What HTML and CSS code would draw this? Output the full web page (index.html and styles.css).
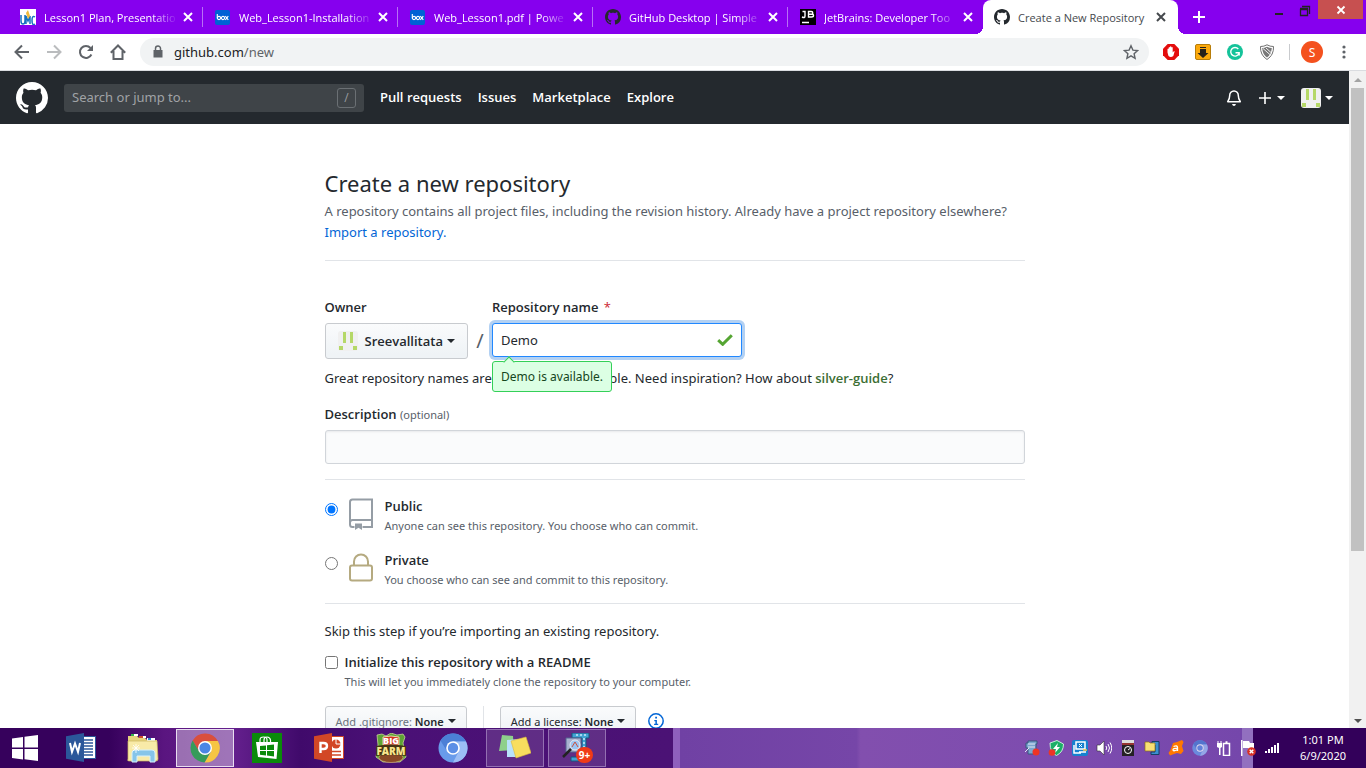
FILE: index.html
```html
<!DOCTYPE html>
<html lang="en">
<head>
<meta charset="utf-8">
<meta name="viewport" content="width=device-width, initial-scale=1">
<title>Create a New Repository</title>
<link rel="stylesheet" href="styles.css">
</head>
<body>
<svg class="defs" aria-hidden="true">
  <symbol id="cat" viewBox="0 0 16 16"><path d="M8 0C3.58 0 0 3.58 0 8c0 3.54 2.29 6.53 5.47 7.59.4.07.55-.17.55-.38 0-.19-.01-.82-.01-1.49-2.01.37-2.53-.49-2.69-.94-.09-.23-.48-.94-.82-1.13-.28-.15-.68-.52-.01-.53.63-.01 1.08.58 1.23.82.72 1.21 1.87.87 2.33.66.07-.52.28-.87.51-1.07-1.78-.2-3.64-.89-3.64-3.95 0-.87.31-1.59.82-2.15-.08-.2-.36-1.02.08-2.12 0 0 .67-.21 2.2.82.64-.18 1.32-.27 2-.27s1.36.09 2 .27c1.53-1.04 2.2-.82 2.2-.82.44 1.1.16 1.92.08 2.12.51.56.82 1.27.82 2.15 0 3.07-1.87 3.75-3.65 3.95.29.25.54.73.54 1.48 0 1.07-.01 1.93-.01 2.2 0 .21.15.46.55.38A8.01 8.01 0 0 0 16 8c0-4.42-3.58-8-8-8z"/></symbol>
  <symbol id="x" viewBox="0 0 16 16"><path d="M4 4l8 8M12 4l-8 8" fill="none" stroke="currentColor" stroke-width="2"/></symbol>
  <symbol id="box" viewBox="0 0 16 16"><rect y="1" width="15" height="15" rx="2" fill="#0061d5"/><g fill="none" stroke="#fff" stroke-width="1.1"><path d="M2.300 5v4.500"/><circle cx="4" cy="9" r="1.600"/><circle cx="8" cy="9" r="1.600"/><path d="M10.300 7.200l3 3.600M13.300 7.200l-3 3.600"/></g></symbol>
  <symbol id="ident" viewBox="0 0 20 20"><rect width="20" height="20" rx="3" fill="#f0f0f0"/><path fill="#b5d867" d="M5 1h3v11H5zM12 1h3v11h-3zM1 15h4v4H1zM15 15h4v4h-4z"/></symbol>
  <symbol id="chromium" viewBox="0 0 30 30"><circle cx="15" cy="15" r="14.500" fill="#689bea"/><path d="M15 8.500h13A14.500 14.500 0 0 0 2.500 7.700L9.300 18.500z" fill="#4b7fd6"/><path d="M15 8.500h13a14.500 14.500 0 0 1-13 21l5.700-11z" fill="#9cbef5"/><circle cx="15" cy="15" r="6.800" fill="#fff"/><circle cx="15" cy="15" r="5.200" fill="#5c8fe6"/></symbol>
</svg>

<div class="tabs" role="tablist">
  <div class="tab">
    <svg class="i16" viewBox="0 0 16 16"><path fill="#fff" d="M0 0h16v16H0z"/><path d="M1 6v6q0 3 2 3t2-3V6M6 15V7l2 5 2-5v8M15 8q-3-2-3 3.500T15 15" fill="none" stroke="#1670c0" stroke-width="1.500"/><path d="M6 4l2-3 2 6-2 3z" fill="#efb93b"/></svg>
    <a class="tab-title" href="#">Lesson1 Plan, Presentatio</a>
    <button class="tab-x" aria-label="Close tab"><svg class="i16"><use href="#x"/></svg></button>
  </div>
  <div class="tab">
    <svg class="i16"><use href="#box"/></svg>
    <a class="tab-title" href="#">Web_Lesson1-Installation</a>
    <button class="tab-x" aria-label="Close tab"><svg class="i16"><use href="#x"/></svg></button>
  </div>
  <div class="tab">
    <svg class="i16"><use href="#box"/></svg>
    <a class="tab-title" href="#">Web_Lesson1.pdf | Powe</a>
    <button class="tab-x" aria-label="Close tab"><svg class="i16"><use href="#x"/></svg></button>
  </div>
  <div class="tab">
    <svg class="i16 dark"><use href="#cat"/></svg>
    <a class="tab-title" href="#">GitHub Desktop | Simple</a>
    <button class="tab-x" aria-label="Close tab"><svg class="i16"><use href="#x"/></svg></button>
  </div>
  <div class="tab">
    <svg class="i16" viewBox="0 0 16 16"><path d="M0 0h16v16H0z"/><path d="M2 8q3 1.500 3-1V2.500H2.500M8.500 2.500V8h3q2 0 2-1.500t-2-1.300h-3 2.700q1.600 0 1.600-1.300t-1.600-1.400zM2 13.500h7" fill="none" stroke="#fff" stroke-width="1.400"/></svg>
    <a class="tab-title" href="#">JetBrains: Developer Too</a>
    <button class="tab-x" aria-label="Close tab"><svg class="i16"><use href="#x"/></svg></button>
  </div>
  <div class="tab active">
    <svg class="i16 dark"><use href="#cat"/></svg>
    <a class="tab-title" href="#">Create a New Repository</a>
    <button class="tab-x" aria-label="Close tab"><svg class="i16"><use href="#x"/></svg></button>
  </div>
  <button class="newtab" aria-label="New tab"><svg class="i16" viewBox="0 0 16 16"><path d="M8 2v12M2 8h12" stroke="#fff" stroke-width="2"/></svg></button>
  <div class="winctl">
    <button aria-label="Minimize"><svg class="i16" viewBox="0 0 16 16"><path fill="#222" d="M4 11h8v2H4z"/></svg></button>
    <button aria-label="Restore"><svg class="i16" viewBox="0 0 16 16"><path d="M3.500 7.500h7v6h-7zM3 6.500h8M5 4.500h7.500V12" fill="none" stroke="#222" stroke-width="1.300"/></svg></button>
    <button class="close" aria-label="Close"><svg class="i16" viewBox="0 0 16 16"><path d="M4.500 4.500l7 7M11.500 4.500l-7 7" stroke="#fff" stroke-width="1.800"/></svg></button>
  </div>
</div>

<div class="toolbar">
  <button aria-label="Back"><svg class="i16" viewBox="0 0 16 16"><path d="M15 8H2M8 1.500L1.500 8 8 14.500" fill="none" stroke="#5f6368" stroke-width="2"/></svg></button>
  <button aria-label="Forward"><svg class="i16" viewBox="0 0 16 16"><path d="M1 8h13M8 1.500L14.500 8 8 14.500" fill="none" stroke="#babcbe" stroke-width="2"/></svg></button>
  <button aria-label="Reload"><svg class="i16" viewBox="0 0 16 16"><path d="M13.400 10.500A6 6 0 1 1 12.500 4" fill="none" stroke="#5f6368" stroke-width="2"/><path d="M15 1v6H9z" fill="#5f6368"/></svg></button>
  <button aria-label="Home"><svg class="i16" viewBox="0 0 16 16"><path d="M.8 8.700L8 1.500l7.200 7.200M3.500 7v8h9V7" fill="none" stroke="#5f6368" stroke-width="2"/></svg></button>
  <div class="omni">
    <svg class="i16" viewBox="0 0 16 16"><path d="M3.500 6h9v7.500h-9z" fill="#5f6368"/><path d="M5.500 6V4.500a2.500 2.500 0 0 1 5 0V6" fill="none" stroke="#5f6368" stroke-width="1.500"/></svg>
    <span class="url"><b>github.com</b>/new</span>
    <button aria-label="Bookmark"><svg class="i16" viewBox="0 0 16 16"><path d="M8 1.800l1.900 4.300 4.700.5-3.500 3.100 1 4.600L8 11.900l-4.100 2.400 1-4.600L1.400 6.600l4.700-.5z" fill="none" stroke="#5f6368" stroke-width="1.400"/></svg></button>
  </div>
  <div class="exts">
    <button aria-label="Ad blocker"><svg class="i16" viewBox="0 0 16 16"><path fill="#e40d0d" d="M4.700 0h6.600L16 4.700v6.600L11.300 16H4.700L0 11.300V4.700z"/><path d="M4.500 8.500V5q.7-1 1.200 0v2.500V3.500q.7-1 1.300 0V7 2.800q.7-1 1.400 0V7 3.500q.7-1 1.300 0v5q1-1.800 2-1.200L10.300 12q-2.500 2-4.800 0z" fill="#fff"/></svg></button>
    <button aria-label="Downloader"><svg class="i16" viewBox="0 0 16 16"><rect x=".5" y=".5" width="15" height="15" rx="1.500" fill="#fca90b" stroke="#b77d0a"/><path d="M5 3h6v1H5zM5 5h6v4h2.500L8 14 2.500 9H5z" fill="#27211a"/></svg></button>
    <button aria-label="Grammar checker"><svg class="i16" viewBox="0 0 16 16"><circle cx="8" cy="8" r="8" fill="#15c39a"/><path d="M11.300 5A4.300 4.300 0 1 0 12 9.500M8.500 8.800h3.700v2.700" fill="none" stroke="#fff" stroke-width="1.400"/></svg></button>
    <button aria-label="Shield"><svg class="i16" viewBox="0 0 16 16"><path d="M8 .8q3 1.800 6.500 1.700Q15 11 8 15.500 1 11 1.500 2.500 5 2.600 8 .8z" fill="#fff" stroke="#707070" stroke-width="1"/><path d="M8 2.700q2.500 1.200 4.800 1.400Q12.500 10.500 8 13.500 3.500 10.500 3.200 4.100 5.500 4 8 2.700z" fill="#777"/><path d="M4 4.500l8 7M7 4l5 4.500" stroke="#eee" stroke-width="1"/></svg></button>
  </div>
  <button class="profile">S</button>
  <button aria-label="Menu"><svg class="i16" viewBox="0 0 16 16"><g fill="#5f6368"><circle cx="8" cy="3" r="1.600"/><circle cx="8" cy="8" r="1.600"/><circle cx="8" cy="13" r="1.600"/></g></svg></button>
</div>

<div class="view">
  <div class="page">
    <header class="gh">
      <a href="#" aria-label="Homepage"><svg class="logo"><use href="#cat"/></svg></a>
      <div class="search"><input type="text" aria-label="Search" placeholder="Search or jump to..."><kbd>/</kbd></div>
      <nav><a href="#">Pull requests</a><a href="#">Issues</a><a href="#">Marketplace</a><a href="#">Explore</a></nav>
      <div class="user">
        <button aria-label="Notifications"><svg class="i16" viewBox="0 0 16 16"><path d="M8 1a4.300 4.300 0 0 0-4.300 4.500c0 3-.6 4.200-2 6.200h12.600c-1.400-2-2-3.200-2-6.200A4.300 4.300 0 0 0 8 1z" fill="none" stroke="#fff" stroke-width="1.500" stroke-linejoin="round"/><path d="M6 14h4q-.6 2-2 2t-2-2z" fill="#fff"/></svg></button>
        <button class="drop" aria-label="Create new"><svg class="plus" viewBox="0 0 14 14"><path d="M7 1v12M1 7h12" stroke="#fff" stroke-width="1.600"/></svg><span class="caret"></span></button>
        <button class="drop" aria-label="Account"><svg class="i20"><use href="#ident"/></svg><span class="caret"></span></button>
      </div>
    </header>

    <main>
      <div class="intro">
        <h1>Create a new repository</h1>
        <p>A repository contains all project files, including the revision history. Already have a project repository elsewhere? <a href="#">Import a repository.</a></p>
      </div>
      <form>
        <div class="names">
          <div class="field">
            <label for="owner">Owner</label>
            <button class="btn owner" id="owner" type="button"><svg class="i20"><use href="#ident"/></svg><span>Sreevallitata</span><span class="caret"></span></button>
          </div>
          <span class="slash">/</span>
          <div class="field">
            <label for="repo">Repository name <span class="req">*</span></label>
            <div class="repo">
              <input id="repo" type="text" value="Demo">
              <svg class="check" viewBox="0 0 16 12"><path d="M1.200 6.200l4.500 4.100L14.800 1.300" fill="none" stroke="#55a532" stroke-width="3"/></svg>
              <div class="tip" role="status">Demo is available.</div>
            </div>
          </div>
        </div>
        <p class="hint">Great repository names are short and memorable. Need inspiration? How about <strong>silver-guide</strong>?</p>
        <div class="field desc">
          <label for="desc">Description <small>(optional)</small></label>
          <input id="desc" type="text">
        </div>
        <div class="options">
          <div class="option">
            <input type="radio" name="vis" id="public" checked>
            <svg class="vis" viewBox="0 0 24 32"><path d="M5.500 29H3.500Q1 29 1 26.500V4q0-2.500 2.500-2.500H23V29h-9.500M1 24.500q0-2.500 2.500-2.500H23" fill="none" stroke="#959da5" stroke-width="2"/><path d="M6 25.500h7V32l-3.500-2.300L6 32z" fill="#959da5"/></svg>
            <label for="public">Public<span class="note">Anyone can see this repository. You choose who can commit.</span></label>
          </div>
          <div class="option">
            <input type="radio" name="vis" id="private">
            <svg class="vis" viewBox="0 0 24 32"><rect x="1" y="13.500" width="22" height="15" rx="2" fill="none" stroke="#b5aa80" stroke-width="2"/><path d="M5 13V9.500a7 7 0 0 1 14 0V13" fill="none" stroke="#b5aa80" stroke-width="2"/></svg>
            <label for="private">Private<span class="note">You choose who can see and commit to this repository.</span></label>
          </div>
        </div>
        <p class="skip">Skip this step if you’re importing an existing repository.</p>
        <div class="readme">
          <input type="checkbox" id="readme">
          <label for="readme">Initialize this repository with a README<span class="note">This will let you immediately clone the repository to your computer.</span></label>
        </div>
        <div class="extras">
          <button class="btn small" type="button"><span><i>Add .gitignore:</i> None</span><span class="caret"></span></button>
          <span class="rule"></span>
          <button class="btn small" type="button"><span><em>Add a license:</em> None</span><span class="caret"></span></button>
          <svg class="i16" viewBox="0 0 16 16"><circle cx="8" cy="8" r="7.200" fill="none" stroke="#0366d6" stroke-width="1.500"/><path d="M7.200 3.800h1.800v1.700H7.200zM6.300 7h2.600v3.800h1.300v1.300H6.100v-1.300h1.300V8.200H6.300z" fill="#0366d6"/></svg>
        </div>
      </form>
    </main>
  </div>
  <div class="scroll" aria-hidden="true"><span class="arrow up"></span><span class="thumb"></span><span class="arrow down"></span></div>
</div>

<footer class="taskbar">
  <button class="start" aria-label="Start"><svg viewBox="0 0 26 26"><path fill="#fff" d="M0 3.500L11 2v10.500H0zM12.500 1.800L26 0v12.500H12.500zM0 14h11v10.500L0 23zM12.500 14H26v12l-13.500-1.800z"/></svg></button>
  <div class="apps">
    <button aria-label="Word"><svg viewBox="0 0 30 30"><path fill="#fff" stroke="#2b579a" d="M16 3.500h13.500v22H16z"/><path d="M18 7h9M18 10h9M18 13h9M18 16h9M18 19h9M18 22h9" stroke="#2b579a" stroke-width="1.400"/><path fill="#2b579a" d="M0 3.300L18 0v29L0 25.700z"/><path d="M4 10l2 9L9 10.500 12 19l2-9" fill="none" stroke="#fff" stroke-width="2"/></svg></button>
    <button aria-label="File Explorer"><svg class="wide" viewBox="0 0 32 30"><path fill="#e5d37e" d="M1 3h9l2 2h6l2 2h10v20H1z"/><path fill="#fff" d="M4 1h7v2H4zM12 3h7v2h-7zM20 5h8v3h-8z"/><path fill="#34b24a" d="M4 1h3v2H4z"/><path fill="#d14b2c" d="M12 3h4v2h-4z"/><path fill="#2987cf" d="M21 5h3v2h-3z"/><path fill="#f8eaa8" stroke="#cbb65b" stroke-width=".7" d="M1 8h29l1 18q0 2-2 2H2q-2 0-1-2z"/><path fill="#86c5e9" stroke="#d7f1fb" d="M5 29V20q0-3 3-3h17q3 0 3 3v9h-5v-6H10v6z"/><path d="M9 11v9M5 15h8M6 12l6 6M12 12l-6 6" stroke="#fff" stroke-width=".8"/></svg></button>
    <button class="open now" aria-label="Chrome"><svg viewBox="0 0 30 30"><path fill="#d94f3d" d="M15 8h12.800A14.500 14.500 0 0 0 2.600 7.500L9 18.300z"/><path fill="#f6c544" d="M15 8h12.900A14.500 14.500 0 0 1 14.500 29.500L21 18.500z"/><path fill="#359b5a" d="M2.600 7.500A14.500 14.500 0 0 0 14.500 29.500L20.500 19 9 18.300z"/><circle cx="15" cy="15" r="7" fill="#fff"/><circle cx="15" cy="15" r="5.600" fill="#4a86e4"/></svg></button>
    <button aria-label="Store"><svg viewBox="0 0 30 30"><path fill="#0a8a0a" d="M0 0h30v30H0z"/><path d="M8 10V7q0-3 3.500-3T15 7v3M12 10V7q0-3 3-3t3.500 3v3" fill="none" stroke="#fff" stroke-width="1.200"/><path fill="#fff" d="M4 9h22l-1.500 17L6 24z"/><path fill="#0a8a0a" d="M8 13l6-.6v4.600H8zM15 12.300l7-.8V17h-7zM8 18h6v4.400l-6-.6zM15 18h7v5.500l-7-.9z"/></svg></button>
    <button aria-label="PowerPoint"><svg viewBox="0 0 30 30"><path fill="#fff" stroke="#d24726" d="M16 3.500h13.500v22H16z"/><path d="M18 18.500h9M18 22h9" stroke="#d24726" stroke-width="1.500"/><circle cx="22" cy="11" r="4.500" fill="#d24726"/><path d="M22 6v5h5" stroke="#fff" fill="none"/><path fill="#d24726" d="M0 3.300L18 0v29L0 25.700z"/><path d="M6.500 20V10h3q3.500 0 3.500 3t-3.500 3h-3" fill="none" stroke="#fff" stroke-width="2.400"/></svg></button>
    <button aria-label="Big Farm"><svg class="wide" viewBox="0 0 32 30"><path fill="#5fa336" stroke="#d9dfa0" stroke-width=".7" d="M2 2l5-1 4 2 5-3 6 2 6-1 2 3-2 6 3 14-6 5H8l-7-5L3 12z"/><ellipse cx="16" cy="24.500" rx="12" ry="5" fill="#8a4a26" stroke="#d8b47a" stroke-width=".6"/><path fill="#cf3420" stroke="#fff4cb" stroke-width=".8" d="M8 4l8-1 8 1v8H8z"/><text class="farm-s" x="16" y="11" text-anchor="middle">BIG</text><path d="M1 13q15-3 30 0v10q-15-2-30 0z" fill="#463414"/><text class="farm-l" x="16" y="22" text-anchor="middle">FARM</text></svg></button>
    <button aria-label="Chromium"><svg><use href="#chromium"/></svg></button>
    <button class="open" aria-label="Sticky Notes"><svg class="wide" viewBox="0 0 32 30"><path fill="#8ed08b" d="M3 2l11 1 1 14-15 1z"/><path fill="#b9e2fb" d="M8 7l12-1v18H8z"/><path fill="#f8de5e" stroke="#d9b83e" stroke-width=".6" d="M12 8l15-4 5 16-15 5z"/></svg></button>
    <button class="open" aria-label="WinZip"><svg class="wide" viewBox="0 0 32 30"><path fill="#41a3d4" stroke="#14577f" d="M11 0h17v5h-3v19h3v4H10v-4h11V5H11z"/><path d="M23 5v19M15 2h10" stroke="#c6e8f7" stroke-width="1.500" stroke-dasharray="2 2"/><path fill="#a9b2cf" stroke="#53658f" d="M5 5h15v14H5z"/><circle cx="14" cy="12" r="5" fill="#9cc4f2" stroke="#e8edf5"/><path d="M11 14l3-5 3 5" stroke="#ca5442" fill="none"/><path d="M10 16l-8 8" stroke="#222" stroke-width="2.500"/></svg><span class="count">9+</span></button>
  </div>
  <div class="tray">
    <svg class="i16" viewBox="0 0 16 16"><path fill="#7aa6cf" stroke="#38597e" d="M4 1h9v3h-1v8h2v2H4V8H2V3h2z"/><path d="M4 4h7M4 7h7M1 12l4-4" stroke="#dfe8f5"/><circle cx="12" cy="12" r="3.500" fill="#ed3425"/></svg>
    <svg class="i16" viewBox="0 0 16 16"><path fill="#1caf67" stroke="#c9eedb" d="M2 3l7-2.500L15.500 4q0 8-7 11.500Q2 13 2 3z"/><path fill="#fff" d="M10 3L5 9h3l-1 4 5-6H9z"/><circle cx="4" cy="12.500" r="3.300" fill="#ed3425"/></svg>
    <svg class="i16" viewBox="0 0 16 16"><rect width="16" height="16" rx="2" fill="#1681cf"/><path d="M4 2h9v7H4zM2 5v8h7M7 12h7" fill="none" stroke="#fff" stroke-width="1.500"/><path d="M7 4l3 3M10 4L7 7" stroke="#fff"/><path d="M11 10h4" stroke="#f4c44b" stroke-width="1.500"/></svg>
    <svg class="i16" viewBox="0 0 16 16"><path fill="#fff" stroke="#333" stroke-width=".6" d="M1 5h3l4-4v14l-4-4H1z"/><path d="M10 6q1.500 2 0 4M12 4q3 4 0 8M14 2.500q3.500 5.500 0 11" fill="none" stroke="#fff"/></svg>
    <svg class="i16" viewBox="0 0 16 16"><path fill="#242124" d="M2 0h12v16H2z"/><path fill="#ddd" d="M2 0h12v3H2z"/><path d="M2 4h12" stroke="#bb3d36" stroke-width="1.500"/><circle cx="8" cy="10" r="3.500" fill="none" stroke="#fff"/><path d="M8 10l2-1.500" stroke="#fff"/></svg>
    <svg class="i16" viewBox="0 0 16 16"><path fill="#3c8fd0" stroke="#153f66" d="M8 1.500h7v13H7V12h4V5H8z"/><path fill="#f8df74" stroke="#917213" stroke-width=".7" d="M1 2h4l1 1h5v8H1z"/></svg>
    <svg class="i16" viewBox="0 0 16 16"><path fill="#ff7800" d="M9 2l5-2 1.500 2L14 6l1.500 5-2.500 3-4-1-3 1-4 1.500L.5 13l2-3L5 3z"/><path d="M5.500 6.500q4-1.500 4 1v3.500M9 8.500q-4-.5-4 1.300T9 10" fill="none" stroke="#fff" stroke-width="1.300"/></svg>
    <svg class="i16 dim"><use href="#chromium"/></svg>
    <svg class="i16" viewBox="0 0 16 16"><path d="M7.500 3.500h6v12h-6zM9.500 2h2" fill="none" stroke="#fff" stroke-width="1.500"/><path fill="#fff" d="M1 3h5v4L4.500 8v7H3V8L1 7zM1.500 1h1v2h-1zM4.500 1h1v2h-1z"/></svg>
    <svg class="i16" viewBox="0 0 16 16"><path fill="#fff" d="M1 0h1.500v16H1zM3 1h6l1 2h4v6H9L8 8H3z"/><circle cx="11.500" cy="11.500" r="4.300" fill="#d93025"/><path d="M9.700 9.700l3.600 3.600M13.300 9.700l-3.600 3.600" stroke="#fff" stroke-width="1.400"/></svg>
    <svg class="i16" viewBox="0 0 16 16"><path fill="#fff" d="M1 11h2v2H1zM4 9h2v4H4zM7 7h2v6H7zM10 5h2v8h-2zM13 3h2v10h-2z"/></svg>
  </div>
  <div class="clock"><span>1:01 PM</span><span>6/9/2020</span></div>
</footer>
</body>
</html>
```
FILE: styles.css
```css
* { box-sizing: border-box; }
body { margin: 0; height: 100vh; display: flex; flex-direction: column; overflow: hidden; font: 13px/21px "Noto Sans", "Open Sans", sans-serif; color: #24292e; background: #fff; }
button, input { font: inherit; color: inherit; margin: 0; }
button { border: 0; padding: 0; background: none; display: flex; align-items: center; justify-content: center; }
a { color: #0366d6; text-decoration: none; }
p, h1 { margin: 0; }
svg { display: block; flex: none; }
.defs { position: absolute; width: 0; height: 0; }
.i16 { width: 16px; height: 16px; }
.i20 { width: 20px; height: 20px; }
.dim { opacity: .8; }
.dark { fill: #24292e; }
.caret { border: 4px solid transparent; border-top-color: currentColor; border-bottom: 0; }

/* Tab strip */
.tabs { flex: none; height: 34px; display: flex; padding-left: 8px; background: #8600ee; }
.tab { flex: 0 1 195px; min-width: 0; display: flex; align-items: center; padding: 0 7px 0 12px; color: #fff; position: relative; }
.tab:not(.active):not(:nth-child(5))::after { content: ""; position: absolute; right: 0; top: 7px; height: 20px; width: 1px; background: #b870f5; }
.tab-title { flex: 1; min-width: 0; margin: 0 2px 0 8px; overflow: hidden; white-space: nowrap; color: inherit; font: 11px/21px "Open Sans", "Noto Sans", sans-serif; mask-image: linear-gradient(90deg, #000 80%, transparent); }
.active { background: #fff; color: #45494d; border-radius: 8px 8px 0 0; padding-left: 11px; padding-right: 9px; }
.active .tab-title { mask-image: none; margin-right: 0; }
.active::before, .active::after { content: ""; position: absolute; bottom: 0; width: 8px; height: 8px; }
.active::before { left: -8px; background: radial-gradient(circle at 0 0, transparent 8px, #fff 8px); }
.active::after { right: -8px; background: radial-gradient(circle at 100% 0, transparent 8px, #fff 8px); }
.newtab { width: 42px; color: #fff; }
.winctl { margin-left: auto; display: flex; align-items: flex-start; padding-right: 3px; }
.winctl button { width: 26px; height: 19px; }
.winctl .close { width: 45px; background: #c75050; }

/* Address bar */
.toolbar { flex: none; height: 37px; display: flex; align-items: center; gap: 16px; padding: 0 14px; border-bottom: 1px solid #dadce0; }
.omni { flex: 1; height: 28px; margin: 0 -2px; display: flex; align-items: center; gap: 8px; padding: 0 10px; border-radius: 14px; background: #f1f3f4; }
.url { flex: 1; color: #5f6368; }
.url b { font-weight: 400; color: #202124; }
.exts { display: flex; gap: 16px; padding-right: 14px; border-right: 1px solid #c9cbce; height: 16px; }
.profile { width: 22px; height: 22px; margin: 0 -3px 0 -5px; border-radius: 50%; background: #f4511e; color: #fff; font-size: 12px; }

/* Page viewport */
.view { flex: 1; min-height: 0; display: flex; }
.page { flex: 1; min-width: 0; overflow: hidden; }
.scroll { flex: none; width: 17px; display: flex; flex-direction: column; align-items: center; gap: 4px; padding: 7px 0 5px; background: #f1f1f1; }
.thumb { width: 13px; height: 463px; background: #c1c1c1; }
.arrow { border: 4px solid transparent; }
.up { border-top: 0; border-bottom-color: #a3a3a3; margin-bottom: 2px; }
.down { border-bottom: 0; border-top-color: #505050; margin-top: auto; }

/* Site header */
.gh { height: 53px; display: flex; align-items: center; gap: 16px; padding: 0 16px; background: #24292e; color: #fff; }
.logo { width: 32px; height: 32px; fill: #fff; }
.search { flex: 0 1 300px; height: 28px; display: flex; align-items: center; padding: 0 8px; border-radius: 3px; background: #3f4448; }
.search input { flex: 1; min-width: 0; border: 0; padding: 0; background: none; outline: 0; }
.search input::placeholder { color: #a0a3a6; opacity: 1; }
kbd { width: 19px; height: 20px; border: 1px solid #6b7074; border-radius: 3px; color: #999da0; font: 12px/18px "Open Sans", sans-serif; text-align: center; }
nav { display: flex; gap: 16px; font-family: "Open Sans", "Noto Sans", sans-serif; font-weight: 600; }
nav a { color: #fff; }
.user { margin-left: auto; display: flex; align-items: center; gap: 16px; }
.drop { gap: 5px; }
.drop .i20 { margin-right: -1px; }
.plus { width: 14px; height: 14px; }

/* New repository form */
main { max-width: 700px; margin: 0 auto; padding-top: 41px; }
h1 { font-size: 22px; line-height: 36px; font-weight: 400; }
.intro { padding-bottom: 17px; border-bottom: 1px solid #e1e4e8; color: #586069; }
.intro h1 { color: #24292e; }
label, .btn, .hint strong { font-family: "Open Sans", "Noto Sans", sans-serif; font-weight: 600; }
.names { display: flex; align-items: flex-start; padding-top: 36px; }
.field { display: flex; flex-direction: column; gap: 5px; }
.req { color: #cb2431; font-weight: 400; margin-left: 2px; }
.btn { gap: 4px; border: 1px solid #c8cbcf; border-radius: 3px; background: linear-gradient(#fafbfc, #eff3f6 90%); }
.owner { height: 36px; padding: 0 12px; }
.owner .i20 { margin-right: 3px; }
.slash { width: 24px; padding-top: 33px; text-align: center; font-size: 20px; color: #586069; }
.repo { position: relative; width: 250px; }
.repo input, .desc input { display: block; width: 100%; height: 34px; padding: 0 8px; border: 1px solid #d1d5da; border-radius: 3px; background: #fafbfc; box-shadow: inset 0 1px 2px rgba(27,31,35,.075); outline: 0; }
.repo input { border-color: #2188ff; background: #fff; box-shadow: 0 0 0 3px rgba(3,102,214,.3); }
.check { position: absolute; right: 9px; top: 11px; width: 16px; height: 12px; }
.tip { position: absolute; left: 0; top: 38px; height: 31px; padding: 0 8px; border: 1px solid #34d058; border-radius: 3px; background: #dcffe4; color: #144620; font-size: 12px; line-height: 30px; white-space: nowrap; }
.tip::before { content: ""; position: absolute; left: 12px; top: -4px; width: 7px; height: 7px; background: #dcffe4; border: 1px solid #34d058; border-width: 1px 0 0 1px; transform: rotate(45deg); }
.hint { padding: 9px 0 15px; }
.hint strong { color: #3b6e33; }
small { font: 11px "Noto Sans", "Open Sans", sans-serif; color: #586069; }
.options { margin-top: 15px; padding: 16px 0 14px; border: 1px solid #e1e4e8; border-width: 1px 0; display: grid; gap: 15px; }
.option, .readme { display: flex; align-items: flex-start; }
.option input, .readme input { flex: none; width: 13px; height: 13px; margin: 7px 11px 0 0; }
.readme input { margin: 4px 7px 0 0; }
.vis { width: 24px; height: 32px; margin: 2px 12px 0 0; }
.option label, .readme label { flex: 1; }
.option label { height: 39px; }
.note { display: block; font: 11px/18px "Noto Sans", "Open Sans", sans-serif; color: #586069; }
.skip { padding: 17px 0 10px; }
.extras { display: flex; align-items: center; gap: 16px; padding-top: 15px; }
.small { height: 30px; padding: 0 10px; font: 600 11px "Noto Sans", "Open Sans", sans-serif; }
.small i, .small em { font-style: normal; font-weight: 400; }
.small i { color: #6a737d; }
.rule { width: 1px; height: 30px; background: #e1e4e8; }
.extras > .i16 { margin-left: -4px; }

/* Desktop taskbar */
.taskbar { flex: none; height: 40px; display: flex; align-items: center; color: #fff; background: linear-gradient(90deg, #36015c 0 8%, #5a1580 12%, #65208e 17%, #400a6b 22%, #4a1076 28%, #4b1275 49.300%, #8f60bd 49.300% 49.800%, #7041a4 49.800%, #7646a8 62.700%, #824fae 63%, #7d4caf 78%, #7547ab 90.900%, #9270bf 90.900% 91.700%, #33005a 91.700%); }
.start { width: 50px; height: 40px; }
.start svg { width: 26px; height: 26px; }
.apps { display: flex; gap: 4px; padding-left: 2px; }
.apps button { position: relative; width: 58px; height: 38px; }
.apps svg { width: 30px; height: 30px; }
.apps .wide { width: 32px; }
.apps .open { border: 1px solid #9470b2; background: rgba(255,255,255,.12); }
.apps .now { border-color: #e9def0; background: rgba(255,255,255,.38); }
.count { position: absolute; right: 12px; bottom: 3px; width: 17px; height: 16px; border-radius: 8px; background: #f03a17; font: 700 10px/16px "Open Sans", sans-serif; text-align: center; }
.farm-s { font: 800 9px "Open Sans", sans-serif; fill: #fff; }
.farm-l { font: 800 10px "Open Sans", sans-serif; fill: #f8e58d; }
.tray { margin-left: auto; display: flex; gap: 8px; }
.clock { width: 86px; display: flex; flex-direction: column; align-items: center; font-size: 11px; line-height: 16px; }
```
